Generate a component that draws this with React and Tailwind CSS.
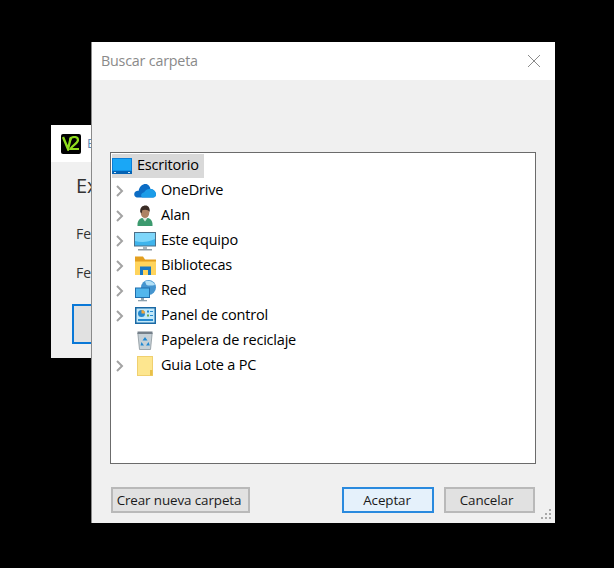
const font = { fontFamily: '"Open Sans","Noto Sans",sans-serif' };

const Chevron = ({ show = true }) => (
  <div className="w-[11px] h-[14px] shrink-0">
    {show && (
      <svg width="11" height="14" viewBox="0 0 11 14" fill="none">
        <path d="M3 2 L8 7 L3 12" stroke="#a3a3a3" strokeWidth="2" />
      </svg>
    )}
  </div>
);

const Desktop = () => (
  <svg width="20" height="16" viewBox="0 0 20 16">
    <rect x="0" y="0" width="20" height="16" fill="#0a7fd8" />
    <rect x="1" y="1" width="18" height="11.5" fill="#1aa7f6" />
    <rect x="0" y="13" width="20" height="3" fill="#0563b4" />
    <rect x="2" y="14" width="2" height="1" fill="#cfe9fb" />
    <rect x="16" y="14" width="2" height="1" fill="#cfe9fb" />
  </svg>
);
const Cloud = () => (
  <svg width="22" height="15" viewBox="0 0 22 15">
    <path d="M4 14.5 C1 14.5 0 12.5 0.3 10.5 C0.8 8.5 3 7.5 4.5 8 C5.5 3 9 0.5 12.5 1 C14.5 1.5 16 3.5 16.5 6 C19.5 6 22 8.5 22 11.5 C22 13.5 20.5 14.5 19 14.5 Z" fill="#0c6cc4" />
    <path d="M8 14.5 L19 14.5 C21 14.5 22 13 22 11.5 C22 8.5 19.5 6 16.5 6 C13.5 5.5 11 7.5 10 9.5 C8 9.5 6 12 8 14.5Z" fill="#1b9ce8" />
  </svg>
);
const User = () => (
  <svg width="18" height="21" viewBox="0 0 18 21">
    <path d="M1.5 21 C1 15.5 4 13 7 13 L11 13 C14 13 17 15.5 16.5 21Z" fill="#3c9a6e" />
    <path d="M6.5 13 L9 16.5 L11.5 13Z" fill="#dbe9e1" />
    <ellipse cx="9" cy="7.5" rx="4.3" ry="5.5" fill="#ad8264" />
    <path d="M4.2 7 C3.8 2.5 6.5 0.5 9.5 0.5 C12.5 0.5 14 3 13.8 7 C12.5 4.5 8.5 4.2 6.3 5.2 L5.6 8.5 Z" fill="#3a2c25" />
  </svg>
);
const Monitor = () => (
  <svg width="22" height="20" viewBox="0 0 22 20">
    <rect x="0" y="1" width="22" height="14.5" fill="#4c6f88" />
    <rect x="1" y="2" width="20" height="12.5" fill="#3fb4ec" />
    <path d="M1 2 H21 V8 C14 11.5 7 11.5 1 10Z" fill="#7ed6fa" />
    <rect x="9" y="15.5" width="4" height="2.5" fill="#a9b4bb" />
    <rect x="4" y="18" width="14" height="1.5" fill="#8f9ba3" />
  </svg>
);
const Library = () => (
  <svg width="21" height="19" viewBox="0 0 21 19">
    <path d="M0 0.5 H8 L10 3.5 H21 V7 H0Z" fill="#e39f1f" />
    <rect x="0" y="5.5" width="21" height="13.5" fill="#ffd45c" />
    <path d="M5 19 V10.5 H16 V19 H13 V14 H8 V19Z" fill="#1878c4" />
  </svg>
);
const Network = () => (
  <svg width="21" height="22" viewBox="0 0 21 22">
    <circle cx="13.5" cy="7.5" r="7.5" fill="#4595cf" />
    <path d="M10 1.5 C13 0 18 1 20 5 C17 5.5 14 6 11.5 5Z" fill="#b2e0f6" />
    <rect x="0" y="7.5" width="15" height="10.5" fill="#1f6fae" />
    <rect x="1" y="8.5" width="13" height="8.5" fill="#52b6ec" />
    <rect x="6" y="18" width="3" height="2" fill="#8fa2ae" />
    <rect x="3" y="20" width="9" height="1.3" fill="#8fa2ae" />
  </svg>
);
const Panel = () => (
  <svg width="21" height="17" viewBox="0 0 21 17">
    <rect x="0" y="0" width="21" height="17" fill="#1a69a5" />
    <rect x="1.5" y="1.5" width="18" height="14" fill="#c3e9fa" />
    <circle cx="6.5" cy="6.5" r="3.5" fill="#2489cf" />
    <path d="M6.5 6.5 V3 A3.5 3.5 0 0 1 10 6.5Z" fill="#f0a63b" />
    <rect x="12" y="3.5" width="2" height="2" fill="#2489cf" />
    <rect x="15" y="4" width="3" height="1" fill="#2489cf" />
    <rect x="12" y="7.5" width="2" height="2" fill="#69a84f" />
    <rect x="15" y="8" width="3" height="1" fill="#2489cf" />
    <rect x="3" y="12" width="15" height="2" fill="#2489cf" />
  </svg>
);
const Bin = () => (
  <svg width="16" height="19" viewBox="0 0 16 19">
    <path d="M0.8 2 H15.2 L13.5 18.5 H2.5Z" fill="#c6d0d6" stroke="#8a959c" strokeWidth="0.8" />
    <rect x="0.5" y="0.5" width="15" height="2.5" fill="#75808a" />
    <path d="M8 6 L10.5 9.5 H5.5Z M4.5 11 L7 14.5 H3.5Z M11.5 11 L12.8 14.5 H9Z" fill="#1f88d2" />
  </svg>
);
const Folder = () => (
  <svg width="16" height="20" viewBox="0 0 16 20">
    <rect x="0.5" y="0.5" width="15" height="19" fill="#fde68f" stroke="#f0d06f" />
    <rect x="13" y="14" width="2.5" height="5.5" fill="#e8c048" />
  </svg>
);

const rows = [
  ["OneDrive", <Cloud />, true],
  ["Alan", <User />, true],
  ["Este equipo", <Monitor />, true],
  ["Bibliotecas", <Library />, true],
  ["Red", <Network />, true],
  ["Panel de control", <Panel />, true],
  ["Papelera de reciclaje", <Bin />, false],
  ["Guia Lote a PC", <Folder />, true],
];

export default function App() {
  return (
    <div className="relative w-[614px] h-[568px] bg-black overflow-hidden text-[#1a1a1a]" style={font}>
      {/* back window */}
      <div className="absolute left-[51px] top-[125px] w-[60px] h-[233px] bg-[#f0f0f0] flex flex-col">
        <div className="h-[37px] bg-white flex items-center pl-[10px] gap-[6px]">
          <div className="w-[20px] h-[20px] bg-black rounded-[2px] flex items-center justify-center">
            <svg width="18" height="15" viewBox="0 0 18 15" fill="none">
              <path d="M1 1 L6 13 L9 1" stroke="#8fdc1e" strokeWidth="2.4" />
              <path d="M8 4 C9 0 16 0 16 4 C16 7.5 10 9 8.5 13 H17" stroke="#8fdc1e" strokeWidth="2.2" />
            </svg>
          </div>
          <span className="text-[13px] text-[#5b8ab8]">E</span>
        </div>
        <div className="pl-[25px] pt-[10px] text-[20px] leading-[27px] text-[#333333]">Ex</div>
        <div className="pl-[25px] pt-[25px] text-[14px] leading-[20px] text-[#333333]">Fe</div>
        <div className="pl-[25px] pt-[19px] text-[14px] leading-[20px] text-[#333333]">Fe</div>
        <div className="ml-[21px] mt-[21px] h-[40px] border-2 border-[#0a78d7] bg-[#e1e1e1]" />
      </div>

      {/* dialog */}
      <div className="absolute left-[91px] top-[42px] w-[464px] h-[481px] bg-[#f0f0f0] flex flex-col border-l border-[#8a8a8a]">
        <div className="h-[38px] bg-white flex items-center justify-between pl-[9px] pr-[14px] shrink-0">
          <span className="text-[14.3px] text-[#8a8a8a] tracking-[-0.2px]">Buscar carpeta</span>
          <svg width="14" height="14" viewBox="0 0 14 14" fill="none">
            <path d="M1 1 L13 13 M13 1 L1 13" stroke="#8a8a8a" strokeWidth="1" />
          </svg>
        </div>

        <div className="mt-[72px] ml-[18px] w-[426px] h-[312px] bg-white border border-[#6b6b6b] p-[1px] shrink-0 flex flex-col text-[14.5px] tracking-[-0.2px]">
          <div className="h-[24px] w-[92px] bg-[#d9d9d9] flex items-center shrink-0">
            <div className="w-[20px] flex justify-center"><Desktop /></div>
            <span className="ml-[5px] text-black -translate-y-px">Escritorio</span>
          </div>
          {rows.map(([label, icon, chev]) => (
            <div key={label} className="h-[25px] flex items-center shrink-0 pl-[2px]">
              <Chevron show={chev} />
              <div className="w-[22px] ml-[9px] flex justify-center items-center">{icon}</div>
              <span className="ml-[5px] text-black -translate-y-px">{label}</span>
            </div>
          ))}
        </div>

        <div className="mt-[23px] ml-[19px] mr-[20px] flex items-start text-[13.4px] tracking-[-0.1px]">
          <button className="w-[139px] h-[26px] bg-[#e1e1e1] border-2 border-[#b9b9b9] flex items-center justify-center pr-[3px]">Crear nueva carpeta</button>
          <button className="ml-auto w-[92px] h-[26px] bg-[#e5f1fb] border-2 border-[#2a8ade] flex items-center justify-center pr-[2px]">Aceptar</button>
          <button className="ml-[10px] w-[91px] h-[26px] bg-[#e1e1e1] border-2 border-[#b9b9b9] flex items-center justify-center pr-[6px]">Cancelar</button>
        </div>

        <div className="absolute right-[2px] bottom-[2px]">
          <svg width="12" height="12" viewBox="0 0 12 12" fill="#a8a8a8">
            <rect x="8" y="0" width="2" height="2" />
            <rect x="4" y="4" width="2" height="2" />
            <rect x="8" y="4" width="2" height="2" />
            <rect x="0" y="8" width="2" height="2" />
            <rect x="4" y="8" width="2" height="2" />
            <rect x="8" y="8" width="2" height="2" />
          </svg>
        </div>
      </div>
    </div>
  );
}
